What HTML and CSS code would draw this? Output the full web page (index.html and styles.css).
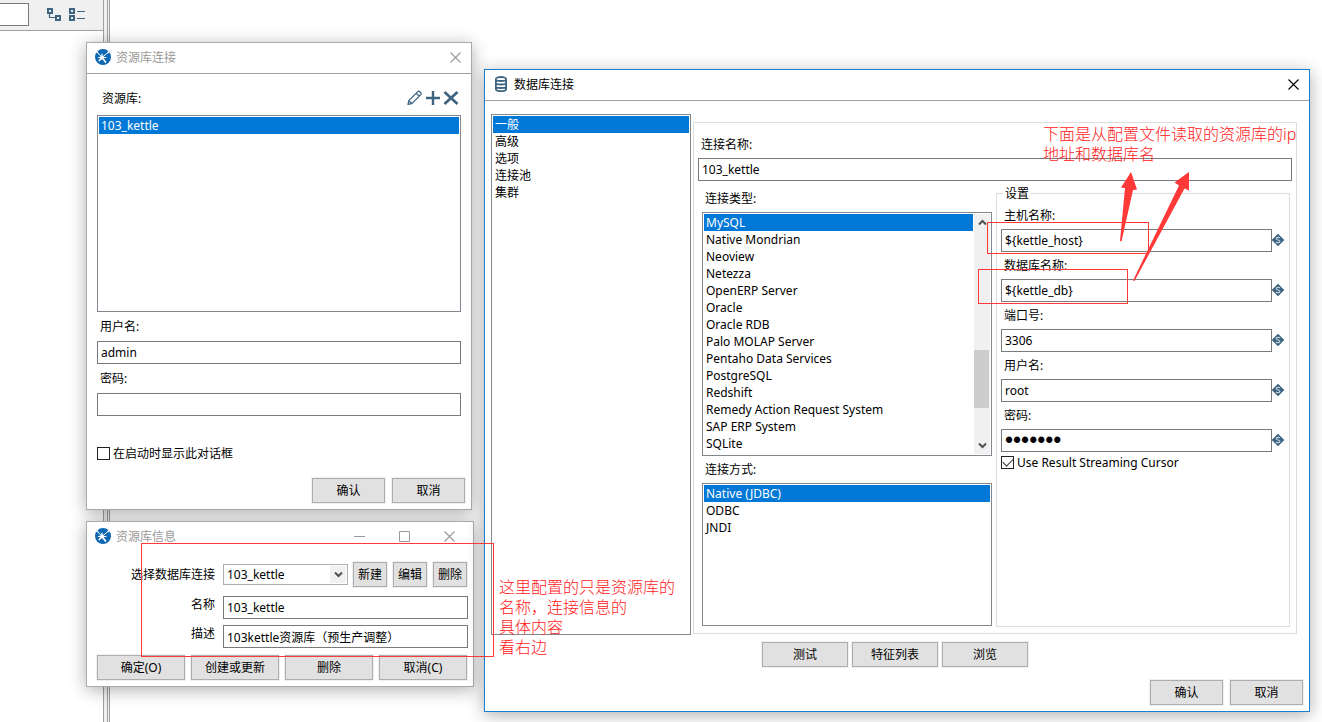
FILE: index.html
```html
<!DOCTYPE html>
<html lang="zh-CN">
<head>
<meta charset="utf-8">
<title>数据库连接</title>
<link rel="stylesheet" href="styles.css">
</head>
<body>
<svg class="defs" aria-hidden="true">
  <symbol id="i-app" viewBox="0 0 16 16">
    <circle cx="8" cy="8" r="8" fill="#0f68b3"/>
    <g stroke="#fff" fill="none" stroke-linecap="round">
      <path d="M7 8.500 2.500 3.500M7 8.500 13 3.500" stroke-width="1"/>
      <path d="M7 5V9M3.500 8.500H11" stroke-width="1.200"/>
      <path d="M7 8.500 4.300 11.500M7 8.500 10.500 13" stroke-width="1.700"/>
    </g>
    <g fill="#fff"><circle cx="2.300" cy="3.300" r="1"/><circle cx="13.500" cy="3.300" r="1"/><circle cx="7" cy="8.500" r="1.900"/></g>
  </symbol>
  <symbol id="i-close" viewBox="0 0 11 11"><path d="M.5.5l10 10M10.500.5l-10 10" stroke="currentColor" stroke-width="1.100"/></symbol>
  <symbol id="i-min" viewBox="0 0 11 11"><path d="M0 5.500h11" stroke="currentColor"/></symbol>
  <symbol id="i-max" viewBox="0 0 11 11"><path d="M.5 .5h10v10h-10z" fill="none" stroke="currentColor"/></symbol>
  <symbol id="i-var" viewBox="0 0 12 12">
    <path d="M6 0 12 6 6 12 0 6z" fill="#3d6480" stroke="#3d6480" stroke-width=".6" stroke-linejoin="round"/>
    <path d="M8 4C7.600 3.100 4.200 2.900 4.200 4.500S7.900 5.900 7.900 7.500 4.500 9 4 7.900" fill="none" stroke="#c3d0d9" stroke-width="1.200"/>
  </symbol>
  <symbol id="i-down" viewBox="0 0 9 7"><path d="M1 1.500 4.500 5 8 1.500" fill="none" stroke="#505050" stroke-width="2"/></symbol>
  <symbol id="i-up" viewBox="0 0 9 7"><path d="M1 5.500 4.500 2 8 5.500" fill="none" stroke="#505050" stroke-width="2"/></symbol>
</svg>

<main class="desktop">
  <div class="workspace">
    <aside class="side">
      <div class="toolbar">
        <input class="search" type="text" aria-label="搜索">
        <button class="tool" aria-label="展开"><svg width="16" height="16" viewBox="0 0 16 16" fill="none" stroke="#3d6480"><path d="M2.500 6v5.500H9" stroke-width="1.200"/><path d="M1 3h4v4H1zM9 10h4v4H9z" stroke-width="2"/></svg></button>
        <button class="tool" aria-label="折叠"><svg width="17" height="16" viewBox="0 0 17 16" fill="none" stroke="#3d6480"><path d="M1 3h4v4H1zM1 10h4v4H1z" stroke-width="2"/><path d="M8 5.500h8M8 12.500h8" stroke-width="1.200"/></svg></button>
      </div>
    </aside>
    <div class="sash"></div>
  </div>

  <section class="window repo">
    <header class="titlebar ruled">
      <svg width="16" height="16"><use href="#i-app"/></svg>
      <h2>资源库连接</h2>
      <button class="caption" aria-label="关闭"><svg width="11" height="11"><use href="#i-close"/></svg></button>
    </header>
    <div class="repo-body">
      <div class="repo-head">
        <span>资源库:</span>
        <div class="actions">
          <button class="tool" aria-label="编辑"><svg width="16" height="16" viewBox="0 0 16 16" fill="none" stroke="#3d6480" stroke-width="1.300" stroke-linejoin="round"><path d="M1 14.400 1.800 10.600 10.800 1.600Q11.800 .8 12.800 1.800L13.700 2.700Q14.600 3.700 13.800 4.600L4.800 13.600ZM9.300 3.200 12.200 6.100M1.900 10.700l2.800 2.800"/></svg></button>
          <button class="tool" aria-label="新增"><svg width="16" height="16" viewBox="0 0 16 16" stroke="#3d6480" stroke-width="2.400"><path d="M1 8h14M8 1v14"/></svg></button>
          <button class="tool" aria-label="移除"><svg width="16" height="16" viewBox="0 0 16 16" stroke="#3d6480" stroke-width="2.700"><path d="M1.500 2 14.500 14M14.500 2 1.500 14"/></svg></button>
        </div>
      </div>
      <ul class="list repo-list" role="listbox" aria-label="资源库">
        <li role="option" aria-selected="true">103_kettle</li>
      </ul>
      <label class="caption-label" for="ru">用户名:</label>
      <input class="field" id="ru" type="text" value="admin">
      <label class="caption-label" for="rp">密码:</label>
      <input class="field" id="rp" type="password">
      <label class="check"><input type="checkbox">在启动时显示此对话框</label>
    </div>
    <footer class="buttons end">
      <button class="btn medium">确认</button>
      <button class="btn medium">取消</button>
    </footer>
  </section>

  <section class="window info">
    <header class="titlebar">
      <svg width="16" height="16"><use href="#i-app"/></svg>
      <h2>资源库信息</h2>
      <button class="caption" aria-label="最小化"><svg width="11" height="11"><use href="#i-min"/></svg></button>
      <button class="caption" aria-label="最大化"><svg width="11" height="11"><use href="#i-max"/></svg></button>
      <button class="caption" aria-label="关闭"><svg width="11" height="11"><use href="#i-close"/></svg></button>
    </header>
    <div class="info-form">
      <label for="conn">选择数据库连接</label>
      <div class="pick">
        <div class="combo">
          <select id="conn"><option>103_kettle</option></select>
          <span class="combo-arrow"><svg width="9" height="7"><use href="#i-down"/></svg></span>
        </div>
        <button class="btn">新建</button>
        <button class="btn">编辑</button>
        <button class="btn">删除</button>
      </div>
      <label for="nm">名称</label>
      <input class="field" id="nm" type="text" value="103_kettle">
      <label for="ds">描述</label>
      <input class="field" id="ds" type="text" value="103kettle资源库（预生产调整）">
    </div>
    <footer class="buttons spread">
      <button class="btn">确定(O)</button>
      <button class="btn">创建或更新</button>
      <button class="btn">删除</button>
      <button class="btn">取消(C)</button>
    </footer>
  </section>

  <section class="window active db">
    <header class="titlebar ruled">
      <svg width="16" height="16" viewBox="0 0 16 16" fill="none" stroke="#3d6480" stroke-width="1.800"><path d="M2.900 3v10c0 3 10.200 3 10.200 0V3c0-2.700-10.200-2.700-10.200 0zM2.900 3.500c0 2 10.200 2 10.200 0M2.900 7c0 2 10.200 2 10.200 0M2.900 10.500c0 2 10.200 2 10.200 0"/></svg>
      <h2>数据库连接</h2>
      <button class="caption" aria-label="关闭"><svg width="11" height="11"><use href="#i-close"/></svg></button>
    </header>
    <div class="db-body">
      <ul class="list pages" role="listbox" aria-label="页面">
        <li role="option" aria-selected="true">一般</li>
        <li role="option">高级</li>
        <li role="option">选项</li>
        <li role="option">连接池</li>
        <li role="option">集群</li>
      </ul>
      <div class="page">
        <label class="page-label" for="cn">连接名称:</label>
        <input class="field" id="cn" type="text" value="103_kettle">
        <div class="columns">
          <div class="kinds">
            <span class="kind-label">连接类型:</span>
            <div class="list scroll-list">
              <ul class="rows" role="listbox" aria-label="连接类型">
                <li role="option" aria-selected="true">MySQL</li>
                <li role="option">Native Mondrian</li>
                <li role="option">Neoview</li>
                <li role="option">Netezza</li>
                <li role="option">OpenERP Server</li>
                <li role="option">Oracle</li>
                <li role="option">Oracle RDB</li>
                <li role="option">Palo MOLAP Server</li>
                <li role="option">Pentaho Data Services</li>
                <li role="option">PostgreSQL</li>
                <li role="option">Redshift</li>
                <li role="option">Remedy Action Request System</li>
                <li role="option">SAP ERP System</li>
                <li role="option">SQLite</li>
              </ul>
              <div class="scrollbar">
                <svg width="9" height="7"><use href="#i-up"/></svg>
                <div class="track"><div class="thumb"></div></div>
                <svg width="9" height="7"><use href="#i-down"/></svg>
              </div>
            </div>
            <span class="kind-label second">连接方式:</span>
            <ul class="list access" role="listbox" aria-label="连接方式">
              <li role="option" aria-selected="true">Native (JDBC)</li>
              <li role="option">ODBC</li>
              <li role="option">JNDI</li>
            </ul>
          </div>
          <fieldset class="settings">
            <legend>设置</legend>
            <label for="s1">主机名称:</label>
            <div class="var-field"><input class="field" id="s1" type="text" value="${kettle_host}"><svg width="12" height="12"><use href="#i-var"/></svg></div>
            <label for="s2">数据库名称:</label>
            <div class="var-field"><input class="field" id="s2" type="text" value="${kettle_db}"><svg width="12" height="12"><use href="#i-var"/></svg></div>
            <label for="s3">端口号:</label>
            <div class="var-field"><input class="field" id="s3" type="text" value="3306"><svg width="12" height="12"><use href="#i-var"/></svg></div>
            <label for="s4">用户名:</label>
            <div class="var-field"><input class="field" id="s4" type="text" value="root"><svg width="12" height="12"><use href="#i-var"/></svg></div>
            <label for="s5">密码:</label>
            <div class="var-field"><input class="field secret" id="s5" type="password" value="kettle1"><svg width="12" height="12"><use href="#i-var"/></svg></div>
            <label class="check"><input type="checkbox" checked>Use Result Streaming Cursor</label>
          </fieldset>
        </div>
      </div>
    </div>
    <div class="buttons tests">
      <button class="btn wide">测试</button>
      <button class="btn wide">特征列表</button>
      <button class="btn wide">浏览</button>
    </div>
    <footer class="buttons end">
      <button class="btn medium">确认</button>
      <button class="btn medium">取消</button>
    </footer>
  </section>

  <div class="mark mark-info"></div>
  <div class="mark mark-host"></div>
  <div class="mark mark-db"></div>
  <svg class="arrows" width="72" height="110" viewBox="0 0 72 110" fill="#ff3838"><path d="M11 0 17 17.500 13 18 1.500 69.500 0 69 5 16 1 15.500z"/><path d="M69 0V18.500L64.500 16.500 14.500 109 13 108.500 59 13.500 54.500 10.500z"/></svg>
  <p class="note note-source">下面是从配置文件读取的资源库的ip<br>地址和数据库名</p>
  <p class="note note-info">这里配置的只是资源库的<br>名称，连接信息的<br>具体内容<br>看右边</p>
</main>
</body>
</html>
```

FILE: styles.css
```css
* { box-sizing: border-box; }

body {
  margin: 0;
  background: #fff;
  color: #000;
  font: 12px/16px "Noto Sans", "Noto Sans CJK SC", sans-serif;
}

input, button, select { font: inherit; color: inherit; margin: 0; }
h2, p, ul { margin: 0; padding: 0; font-weight: normal; }
ul { list-style: none; }
svg { display: block; flex: none; }
.defs { position: absolute; width: 0; height: 0; }

.desktop { position: relative; min-height: 100vh; overflow: hidden; }

/* Main application behind the dialogs */
.workspace { display: flex; height: 100vh; }
.side { width: 103px; }
.toolbar {
  display: flex;
  align-items: center;
  gap: 6px;
  height: 31px;
  padding-bottom: 1px;
  background: #f0f0f0;
  border-bottom: 1px solid #a0a0a0;
}
.search {
  width: 29px;
  height: 23px;
  margin-right: 12px;
  border: 1px solid #7a7a7a;
  border-left: 0;
  background: #fff;
}
.tool { padding: 0; border: 0; background: none; }
.toolbar .tool { padding-bottom: 2px; }
.sash {
  width: 7px;
  background: linear-gradient(90deg, #a0a0a0 1px, #f0f0f0 1px 4px, #a0a0a0 4px 5px, #f0f0f0 5px 6px, #a0a0a0 6px);
}

/* Windows */
.window {
  position: absolute;
  display: flex;
  flex-direction: column;
  background: #fff;
  border: 1px solid #aaa;
  box-shadow: 0 3px 16px rgba(0, 0, 0, .32);
}
.active { border-color: #1a7fcf; }
.repo { left: 86px; top: 42px; width: 386px; }
.info { left: 86px; top: 521px; width: 388px; }
.db { left: 484px; top: 69px; width: 826px; }

.titlebar {
  display: flex;
  align-items: center;
  height: 30px;
  padding: 0 10px 2px 8px;
  color: #999;
}
.ruled { height: 31px; border-bottom: 1px solid #a0a0a0; }
.titlebar h2 { flex: 1; padding: 2px 0 0 5px; font-size: 12px; }
.active .titlebar { color: #000; }
.info .titlebar { padding-right: 18px; }
.caption { padding: 0; border: 0; background: none; }
.caption + .caption { margin-left: 34px; }

/* Shared controls */
.field {
  display: block;
  width: 100%;
  height: 23px;
  padding: 0 3px;
  border: 1px solid #7a7a7a;
  border-radius: 0;
  background: #fff;
  outline: 0;
}
.list { padding: 1px; border: 1px solid #828790; background: #fff; }
.list li { height: 17px; padding-left: 2px; line-height: 17px; white-space: nowrap; }
.list li[aria-selected="true"] { background: #0078d7; color: #fff; }

.btn {
  height: 25px;
  padding: 0;
  border: 1px solid #adadad;
  background: #e1e1e1;
  box-shadow: 0 0 0 1px #f0f0f0;
}
.medium { width: 73px; }
.wide { width: 86px; }
.buttons { display: flex; }
.end { justify-content: flex-end; gap: 7px; padding: 0 6px 6px; }

.check { display: flex; align-items: center; gap: 3px; }
.check input {
  appearance: none;
  display: grid;
  place-items: center;
  width: 13px;
  height: 13px;
  margin-bottom: 1px;
  border: 1px solid #222;
  background: #fff;
}
.check input:checked::before {
  content: "";
  width: 9px;
  height: 5px;
  margin-bottom: 3px;
  border: solid #333;
  border-width: 0 0 1px 1px;
  transform: rotate(-45deg);
}

/* Repository connection */
.repo-body { padding: 16px 10px 0; }
.repo-head { display: flex; justify-content: space-between; padding: 0 0 0 5px; height: 25px; }
.repo-head span { padding-top: 1px; }
.actions { display: flex; gap: 2px; padding-right: 2px; }
.actions .tool { height: 16px; }
.repo-list { height: 197px; }
.caption-label { display: block; height: 29px; padding: 7px 3px 0; }
.repo-body .check { margin-top: 30px; }
.repo .end { padding-top: 16px; }

/* Repository information */
.info-form {
  display: grid;
  grid-template-columns: 118px 1fr;
  column-gap: 8px;
  row-gap: 6px;
  padding: 10px 5px 0 10px;
}
.info-form > label { padding-top: 1px; text-align: right; }
.info-form > label:first-child { padding-top: 5px; }
.pick { display: flex; align-items: center; gap: 6px; height: 28px; padding-bottom: 3px; padding-right: 1px; }
.pick .btn { width: 34px; }
.combo { position: relative; flex: 1; margin-right: -1px; }
.combo select {
  appearance: none;
  display: block;
  width: 100%;
  height: 21px;
  padding: 0 3px;
  border: 1px solid #adadad;
  border-radius: 0;
  background: #fff;
}
.combo-arrow {
  position: absolute;
  inset: 2px 2px 2px auto;
  display: grid;
  place-items: center;
  width: 16px;
  background: #f0f0f0;
  pointer-events: none;
}
.spread { gap: 6px; padding: 7px 6px 6px 10px; }
.spread .btn { flex: 1; }

/* Database connection */
.db-body { display: flex; gap: 2px; padding: 13px 12px 0 6px; }
.pages { width: 200px; height: 521px; }
.page {
  flex: 1;
  display: flex;
  flex-direction: column;
  margin: 8px 0 1px;
  padding: 14px 4px 6px;
  border: 1px solid #dcdcdc;
}
.page-label { padding: 0 3px 5px; }
.columns { flex: 1; display: flex; gap: 4px; padding: 4px 2px 0 4px; }
.kinds { width: 290px; display: flex; flex-direction: column; }
.kind-label { padding: 6px 3px 5px; }
.scroll-list { display: flex; height: 244px; }
.rows { flex: 1; }
.scrollbar {
  display: flex;
  flex-direction: column;
  align-items: center;
  width: 16px;
  padding: 5px 0;
  margin-left: 1px;
  background: #f0f0f0;
}
.track { flex: 1; width: 100%; padding: 124px 1px 0 0; }
.thumb { height: 58px; background: #cdcdcd; }
.access { flex: 1; margin-bottom: 1px; }
.settings { flex: 1; min-width: 0; margin: 0; padding: 0 5px 0 4px; border: 1px solid #dcdcdc; }
.settings legend { padding: 1px 2px 0; margin-left: 2px; }
.settings > label { display: block; height: 27px; padding: 6px 3px 0; }
.var-field { display: flex; align-items: center; }
.var-field .field { flex: 1; min-width: 0; }
.var-field svg { margin-bottom: 2px; }
.secret { font: 23px/20px "Liberation Sans", sans-serif; }
.settings > .check { display: flex; height: 20px; padding: 2px 0 0; }
.tests { justify-content: center; gap: 4px; padding: 7px 4px 0 0; }
.db .end { padding-top: 13px; }

/* Annotations over the windows */
.mark { position: absolute; border: 1px solid #ff3838; }
.mark-info { left: 141px; top: 543px; width: 353px; height: 114px; }
.mark-host { left: 987px; top: 222px; width: 162px; height: 32px; }
.mark-db { left: 978px; top: 269px; width: 150px; height: 35px; }
.arrows { position: absolute; left: 1120px; top: 172px; }
.note { position: absolute; color: #ff2020; font-size: 16px; font-weight: 300; line-height: 20px; white-space: nowrap; }
.note-source { left: 1043px; top: 124px; }
.note-info { left: 499px; top: 577px; }
```
